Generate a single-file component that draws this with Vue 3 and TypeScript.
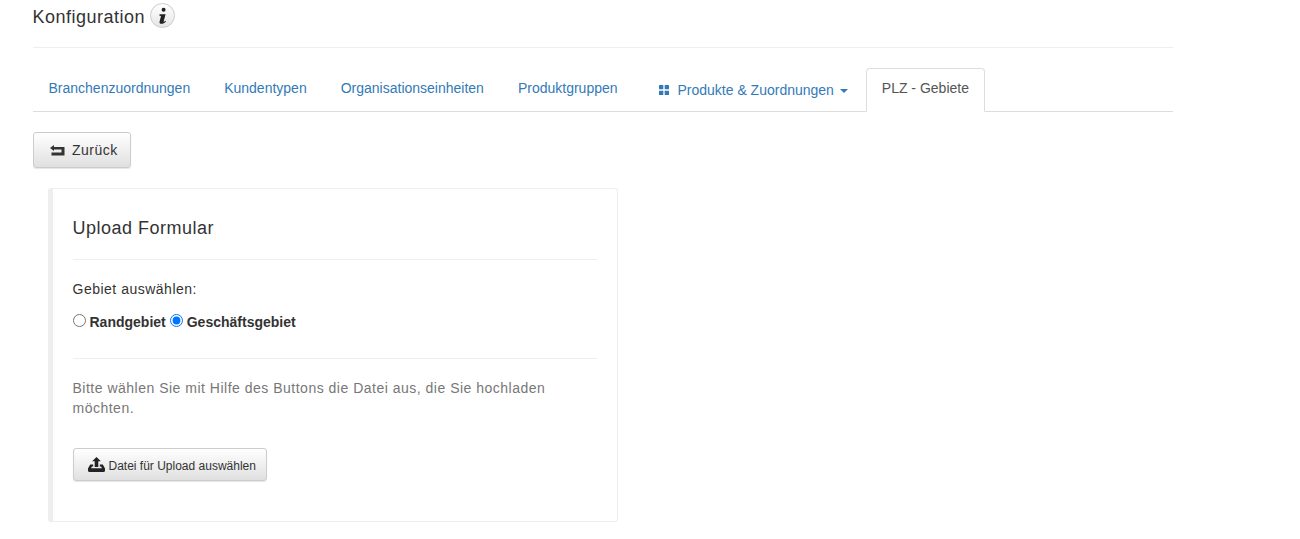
<script setup lang="ts">
const tabs: string[] = ['Branchenzuordnungen', 'Kundentypen', 'Organisationseinheiten', 'Produktgruppen']
</script>

<template>
  <div class="page">
    <header class="head">
      <h1 class="title">Konfiguration</h1>
      <span class="info">
        <svg width="14" height="18" viewBox="0 0 14 18"><path d="M7.600 0.800a2 2 0 1 1 0 4 2 2 0 0 1 0-4zM3.600 7.200h6l-2 7.200c-.1.500.4.600 1.900-.6l.5.700c-1.300 1.500-3 2.300-4.600 2.300-1.500 0-2.200-.8-1.800-2.300l1.300-4.900c.2-.8-.3-.9-1.500-.9z" fill="#222"/></svg>
      </span>
    </header>
    <nav class="tabs">
      <a v-for="t in tabs" :key="t" class="tab">{{ t }}</a>
      <a class="tab drop">
        <svg class="grid" width="10" height="10" viewBox="0 0 10 10" fill="#337ab7"><rect width="4.300" height="4.300" rx=".5"/><rect x="5.700" width="4.300" height="4.300" rx=".5"/><rect y="5.700" width="4.300" height="4.300" rx=".5"/><rect x="5.700" y="5.700" width="4.300" height="4.300" rx=".5"/></svg>
        Produkte &amp; Zuordnungen
        <i class="caret"></i>
      </a>
      <a class="tab active">PLZ - Gebiete</a>
    </nav>
    <button class="btn back">
      <svg width="15" height="11" viewBox="0 0 15 11"><path d="M0 3L4 0V2H14.500V10.500H1.500V7.500H11.500V4.500H4V6z" fill="#333"/></svg>
      Zurück
    </button>
    <section class="card">
      <h2 class="card-title">Upload Formular</h2>
      <div class="rule"></div>
      <p class="lab">Gebiet auswählen:</p>
      <div class="radios">
        <label class="r"><input type="radio" name="g" />Randgebiet</label>
        <label class="r"><input type="radio" name="g" checked />Geschäftsgebiet</label>
      </div>
      <div class="rule second"></div>
      <p class="hint">Bitte wählen Sie mit Hilfe des Buttons die Datei aus, die Sie hochladen möchten.</p>
      <button class="btn upload">
        <svg width="17" height="15" viewBox="0 0 17 15"><path d="M8.500 0L12.800 4.300H10.300V10H6.700V4.300H4.200z" fill="#222"/><path d="M2.200 7.500H5.200V9.500H4L3 11.200H14L13 9.500H11.800V7.500H14.800L17 11.500V13.500A1.500 1.500 0 0 1 15.500 15H1.500A1.500 1.500 0 0 1 0 13.500V11.500z" fill="#222"/></svg>
        Datei für Upload auswählen
      </button>
    </section>
  </div>
</template>

<style>
html, body { margin: 0; background: #fff; }
</style>

<style scoped>
.page {
  width: 1140px;
  margin-left: 32.5px;
  font-family: "Liberation Sans", Arial, sans-serif;
  font-size: 14px;
  color: #333;
  height: 539px;
  overflow: hidden;
}
.head {
  display: flex;
  align-items: flex-start;
  height: 47px;
  border-bottom: 1px solid #eee;
  box-sizing: content-box;
}
.title {
  margin: 6px 0 0;
  font-size: 18px;
  line-height: 22px;
  font-weight: 400;
  letter-spacing: .5px;
  color: #333;
}
.info {
  width: 23px;
  height: 23px;
  margin: 3px 0 0 5px;
  border: 1px solid #ccc;
  border-radius: 50%;
  background: linear-gradient(#fff, #e6e6e6);
  display: flex;
  align-items: center;
  justify-content: center;
}
.tabs {
  display: flex;
  margin-top: 20px;
  height: 43px;
  border-bottom: 1px solid #ddd;
}
.tab {
  padding: 9px 15px 10px;
  border: 1px solid transparent;
  margin-right: 2px;
  color: #337ab7;
  line-height: 20px;
  height: 43px;
  box-sizing: border-box;
  border-radius: 4px 4px 0 0;
  white-space: nowrap;
}
.drop {
  padding-top: 11px;
  margin-left: 8px;
  padding-right: 3px;
  padding-left: 14px;
  margin-right: 0;
}
.grid { margin-right: 5px; }
.caret {
  display: inline-block;
  width: 0;
  height: 0;
  margin-left: 2px;
  vertical-align: middle;
  border-top: 4px solid;
  border-left: 4px solid transparent;
  border-right: 4px solid transparent;
}
.active {
  color: #555;
  background: #fff;
  border-color: #ddd #ddd #fff;
  height: 44px;
  margin-left: 14px;
}
.btn {
  display: flex;
  align-items: center;
  font-family: inherit;
  color: #333;
  border: 1px solid #ccc;
  border-radius: 3px;
  background: linear-gradient(#fff, #e0e0e0);
  box-shadow: 0 1px 1px rgba(0, 0, 0, .1);
  box-sizing: border-box;
}
.back {
  margin-top: 20px;
  width: 98px;
  height: 36px;
  padding: 0 0 0 16.500px;
  gap: 7px;
  font-size: 14px;
  letter-spacing: .5px;
}
.card {
  margin: 20px 0 0 15px;
  width: 570px;
  height: 334px;
  box-sizing: border-box;
  border: 1px solid #eee;
  border-left: 5px solid #eee;
  border-radius: 3px;
  padding: 20px 20px 0;
}
.card-title {
  margin: 0;
  font-size: 18px;
  line-height: 38px;
  font-weight: 400;
  letter-spacing: .5px;
  color: #333;
}
.rule {
  height: 1px;
  background: #eee;
  margin-top: 12px;
}
.lab {
  margin: 19px 0 0;
  line-height: 20px;
  letter-spacing: .5px;
}
.radios {
  margin-top: 13px;
  line-height: 20px;
  display: flex;
  gap: 4px;
}
.r {
  font-weight: 700;
  display: inline-flex;
  align-items: center;
}
.r input {
  margin: 0 4px 3px 0;
  width: 13px;
  height: 13px;
}
.second { margin-top: 26px; }
.hint {
  margin: 19px 0 0;
  line-height: 20px;
  color: #777;
  letter-spacing: .5px;
}
.upload {
  margin-top: 30px;
  width: 194px;
  height: 33px;
  padding: 2px 0 0 14px;
  gap: 4px;
  font-size: 12px;
}
.upload svg { margin-top: -3px; }
</style>
